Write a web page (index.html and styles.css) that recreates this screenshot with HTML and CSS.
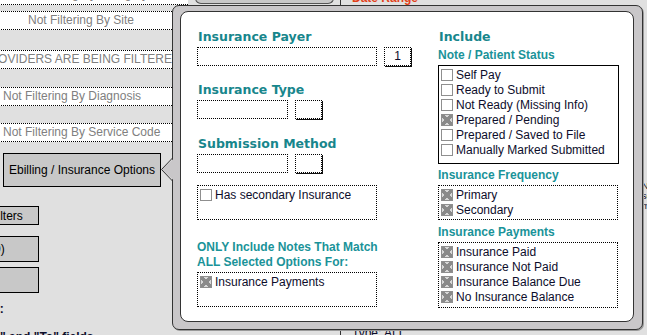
FILE: index.html
```html
<!DOCTYPE html>
<html lang="en">

<head>
    <meta charset="UTF-8">
    <meta name="viewport" content="width=device-width, initial-scale=1.0">
    <title>Ebilling / Insurance Options</title>
    <link rel="stylesheet" href="styles.css">
</head>

<body>
    <div class="page">
        <div class="filters">
            <div class="top-row">
                <div class="field">Not Filtering By Category</div>
                <div class="tab"></div>
            </div>
            <div class="field field-site">Not Filtering By Site</div>
            <div class="field field-prov">PROVIDERS ARE BEING FILTERED</div>
            <div class="field field-left field-diag">Not Filtering By Diagnosis</div>
            <div class="field field-left field-code">Not Filtering By Service Code</div>
            <button class="btn btn-options">Ebilling / Insurance Options</button>
            <button class="btn btn-small">Filters</button>
            <button class="btn btn-tall btn-count">(0)</button>
            <button class="btn btn-tall btn-blank"></button>
            <p class="note note-dates">Dates:</p>
            <p class="note note-fields">From" and "To" fields</p>
        </div>

        <div class="results">
            <div class="results-title">Date Range</div>
            <div class="results-info">
                <div>Needs</div>
                <div>session</div>
                <div>min</div>
            </div>
            <div class="results-type">Type: ALL</div>
        </div>
    </div>

    <div class="popup">
        <svg class="popup-pointer" width="15" height="32" viewBox="0 0 15 32">
            <polygon points="15,4.5 1.5,16.5 15,28.5" fill="#c9c7c9" />
            <polyline points="12.5,5 1.5,16.5 12.5,28" fill="none" stroke="#333" stroke-width="1" />
        </svg>

        <div class="popup-body">
            <div class="col">
                <h2 class="heading">Insurance Payer</h2>
                <div class="input-row">
                    <div class="input input-wide"></div>
                    <div class="pick">1</div>
                </div>

                <h2 class="heading heading-type">Insurance Type</h2>
                <div class="input-row">
                    <div class="input input-short"></div>
                    <div class="pick"></div>
                </div>

                <h2 class="heading heading-method">Submission Method</h2>
                <div class="input-row">
                    <div class="input input-short"></div>
                    <div class="pick"></div>
                </div>

                <div class="box box-left box-secondary">
                    <div class="check"><span class="cb"></span>Has secondary Insurance</div>
                </div>

                <h3 class="subheading subheading-only">ONLY Include Notes That Match<br>ALL Selected Options For:</h3>
                <div class="box box-left box-match">
                    <div class="check"><span class="cb on"></span>Insurance Payments</div>
                </div>
            </div>

            <div class="col">
                <h2 class="heading">Include</h2>
                <h3 class="subheading subheading-status">Note / Patient Status</h3>
                <div class="box box-right box-status">
                    <div class="check"><span class="cb"></span>Self Pay</div>
                    <div class="check"><span class="cb"></span>Ready to Submit</div>
                    <div class="check"><span class="cb"></span>Not Ready (Missing Info)</div>
                    <div class="check"><span class="cb on"></span>Prepared / Pending</div>
                    <div class="check"><span class="cb"></span>Prepared / Saved to File</div>
                    <div class="check"><span class="cb"></span>Manually Marked Submitted</div>
                </div>

                <h3 class="subheading subheading-freq">Insurance Frequency</h3>
                <div class="box box-right box-freq">
                    <div class="check"><span class="cb on"></span>Primary</div>
                    <div class="check"><span class="cb on"></span>Secondary</div>
                </div>

                <h3 class="subheading subheading-pay">Insurance Payments</h3>
                <div class="box box-right box-pay">
                    <div class="check"><span class="cb on"></span>Insurance Paid</div>
                    <div class="check"><span class="cb on"></span>Insurance Not Paid</div>
                    <div class="check"><span class="cb on"></span>Insurance Balance Due</div>
                    <div class="check"><span class="cb on"></span>No Insurance Balance</div>
                </div>
            </div>
        </div>
    </div>
</body>

</html>
```

FILE: styles.css
```css
* {
    box-sizing: border-box;
}

body {
    margin: 0;
    width: 647px;
    height: 335px;
    overflow: hidden;
    position: relative;
    background-color: #e0e0e0;
    font-family: "Liberation Sans", Arial, sans-serif;
    font-size: 12px;
}

.page {
    display: flex;
    height: 100%;
}

/* left filter column */

.filters {
    width: 341px;
    flex-shrink: 0;
    border-right: 1px solid #333;
    display: flex;
    flex-direction: column;
    align-items: flex-start;
}

.filters > * {
    flex-shrink: 0;
}

.top-row {
    display: flex;
    margin-top: -15px;
    height: 20px;
}

.top-row .field {
    height: 20px;
}

.tab {
    margin-left: 7px;
    width: 139px;
    height: 19px;
    background-color: #c8c8c8;
    border: 1px solid #555;
    border-top: none;
    border-radius: 0 0 6px 6px;
}

.field {
    margin-left: -26px;
    width: 214px;
    height: 19px;
    background-color: #fff;
    border-top: 1px dotted #000;
    border-bottom: 1px dotted #000;
    color: #808080;
    text-align: center;
    line-height: 17px;
    white-space: nowrap;
    overflow: hidden;
}

.field-left {
    text-align: left;
    padding-left: 29px;
}

.field-site {
    margin-top: 6px;
}

.field-prov {
    margin-top: 20px;
}

.field-diag {
    margin-top: 18px;
}

.field-code {
    margin-top: 17px;
}

.btn {
    padding: 0;
    background-color: #c8c8c8;
    border: 1px solid #000;
    color: #000;
    font-family: "Liberation Sans", Arial, sans-serif;
    font-size: 12px;
    white-space: nowrap;
}

.btn-options {
    margin: 11px 0 0 3px;
    width: 158px;
    height: 34px;
}

.btn-small {
    margin: 19px 0 0 -26px;
    width: 65px;
    height: 19px;
}

.btn-tall {
    margin-left: -26px;
    width: 65px;
    height: 26px;
}

.btn-count {
    margin-top: 11px;
    text-align: left;
    padding-left: 15px;
}

.btn-blank {
    margin-top: 5px;
}

.note {
    margin: 0;
    font-weight: bold;
    line-height: 15px;
    white-space: nowrap;
    color: #0d0d2b;
}

.note-dates {
    margin: 9px 0 0 -33px;
}

.note-fields {
    margin: 13px 0 0 -30px;
}

/* right results column */

.results {
    flex: 1;
    padding-left: 11px;
    color: #0d0d2b;
    white-space: nowrap;
}

.results-title {
    margin-top: -9px;
    line-height: 14px;
    font-weight: bold;
    color: #e3401a;
}

.results-info {
    margin: 176px 0 0 290px;
    font-size: 9px;
    line-height: 10px;
}

.results-type {
    margin-top: 115px;
    line-height: 14px;
}

/* ebilling popup */

.popup {
    position: absolute;
    left: 172px;
    top: 5px;
    width: 471px;
    height: 325px;
    padding: 5px 8px 7px 7px;
    background-color: #c9c7c9;
    border: 1px solid #333;
    border-radius: 7px;
    box-shadow: 1px 1px 0 #9a9a9a;
}

.popup-pointer {
    position: absolute;
    left: -13px;
    top: 147px;
}

.popup-body {
    height: 100%;
    background-color: #fff;
    border: 1px solid #333;
    border-radius: 8px;
    padding: 17px 0 0 16px;
    display: grid;
    grid-template-columns: 241px 181px;
    align-items: start;
}

.heading {
    margin: 0;
    padding-left: 1px;
    font: bold 12.5px/15px "DejaVu Sans", Verdana, sans-serif;
    color: #17868c;
    white-space: nowrap;
}

.heading-type {
    margin-top: 16px;
}

.heading-method {
    margin-top: 17px;
}

.subheading {
    margin: 0;
    font: bold 12px/15px "Liberation Sans", Arial, sans-serif;
    color: #1a9399;
    white-space: nowrap;
}

.subheading-only {
    margin-top: 20px;
}

.subheading-status {
    margin-top: 4px;
}

.subheading-freq {
    margin-top: 4px;
}

.subheading-pay {
    margin-top: 5px;
}

.input-row {
    display: flex;
    gap: 7px;
    margin-top: 3px;
}

.input {
    height: 19px;
    background-color: #fff;
    border: 1px dotted #000;
}

.input-wide {
    width: 180px;
}

.input-short {
    width: 91px;
}

.pick {
    width: 27px;
    height: 19px;
    background-color: #fff;
    border: 1px dotted #000;
    box-shadow: 1px 1px 0 #111;
    text-align: center;
    line-height: 17px;
    color: #0d0d2b;
}

.box {
    border: 1px dotted #000;
    padding: 1px 0 0 2px;
}

.box-left {
    width: 180px;
    height: 35px;
}

.box-secondary {
    margin-top: 12px;
}

.box-match {
    margin-top: 2px;
}

.box-right {
    width: 180px;
    margin-top: 2px;
}

.box-status {
    width: 181px;
    height: 99px;
    border: 1px solid #000;
}

.box-freq {
    height: 35px;
}

.box-pay {
    height: 66px;
}

.check {
    display: flex;
    align-items: center;
    height: 15px;
    color: #0d0d2b;
    white-space: nowrap;
}

.cb {
    flex-shrink: 0;
    width: 12px;
    height: 12px;
    margin-right: 3px;
    background-color: #fff;
    border: 1px solid #8f8f8f;
}

.cb.on {
    background:
        linear-gradient(45deg, transparent 38%, #8a8a8a 38%, #8a8a8a 62%, transparent 62%),
        linear-gradient(-45deg, transparent 38%, #8a8a8a 38%, #8a8a8a 62%, transparent 62%),
        #d8d8d8;
}
```
